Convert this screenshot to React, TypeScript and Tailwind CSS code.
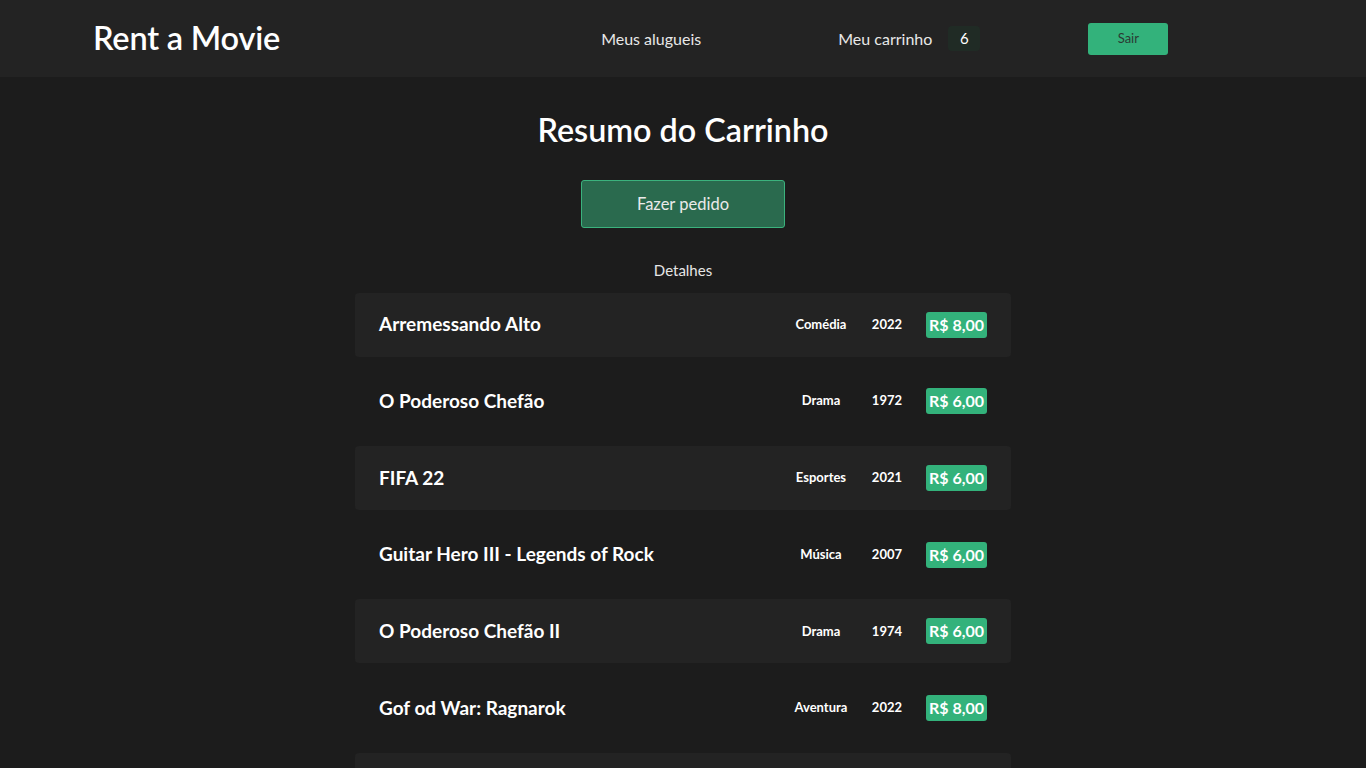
const filmes = [
  { titulo: "Arremessando Alto", genero: "Comédia", ano: "2022", preco: "R$ 8,00" },
  { titulo: "O Poderoso Chefão", genero: "Drama", ano: "1972", preco: "R$ 6,00" },
  { titulo: "FIFA 22", genero: "Esportes", ano: "2021", preco: "R$ 6,00" },
  { titulo: "Guitar Hero III - Legends of Rock", genero: "Música", ano: "2007", preco: "R$ 6,00" },
  { titulo: "O Poderoso Chefão II", genero: "Drama", ano: "1974", preco: "R$ 6,00" },
  { titulo: "Gof od War: Ragnarok", genero: "Aventura", ano: "2022", preco: "R$ 8,00" },
  { titulo: "Horizon Forbidden West", genero: "Aventura", ano: "2022", preco: "R$ 8,00" },
];

export default function App() {
  return (
    <main className="min-h-screen w-full bg-[#1c1c1c] text-white font-['Lato',sans-serif]">
      <header className="flex h-[77px] items-center bg-[#232323] pl-[93px]">
        <h1 className="text-[32.5px] font-semibold tracking-[-0.2px]">Rent a Movie</h1>
        <a className="ml-[321px] text-base text-[#e8e8e8]">Meus alugueis</a>
        <div className="ml-[137px] flex items-center">
          <a className="text-base text-[#e8e8e8]">Meu carrinho</a>
          <span className="ml-[16px] flex h-[25px] w-[32px] items-center justify-center rounded bg-[#202b25] text-[15px]">6</span>
        </div>
        <button
          type="button"
          className="ml-[108px] h-8 w-20 rounded-[3px] bg-[#33b27b] text-[13px] text-[#2b3a33]">
          Sair
        </button>
      </header>

      <section className="flex flex-col items-center">
        <h2 className="mt-[33px] text-[32.3px] font-semibold leading-10">Resumo do Carrinho</h2>
        <button
          type="button"
          className="mt-[30px] h-12 w-[204px] rounded-[3px] border border-[#3bb27d] bg-[#2a6a4e] text-[16.5px] text-[#eaeaea]">
          Fazer pedido
        </button>
        <p className="mt-[31px] text-[15px] text-[#e6e6e6]">Detalhes</p>

        <div className="mt-[11px] flex w-[656px] flex-col gap-[12.7px]">
          {filmes.map((f, i) => (
            <div
              key={f.titulo}
              className={
                i % 2 === 0
                  ? "flex h-16 items-center rounded bg-[#232323] px-6"
                  : "flex h-16 items-center rounded px-6"
              }>
              <span className="flex-1 text-[19px] font-bold">{f.titulo}</span>
              <span className="w-[70px] text-center text-[13px] font-bold">{f.genero}</span>
              <span className="ml-[6px] w-[50px] text-center text-[13px] font-bold">{f.ano}</span>
              <span className="ml-[14px] rounded-[3px] bg-[#33b27b] px-[3px] py-[2px] text-[16px] font-bold leading-[22px]">
                {f.preco}
              </span>
            </div>
          ))}
        </div>
      </section>
    </main>
  );
}
